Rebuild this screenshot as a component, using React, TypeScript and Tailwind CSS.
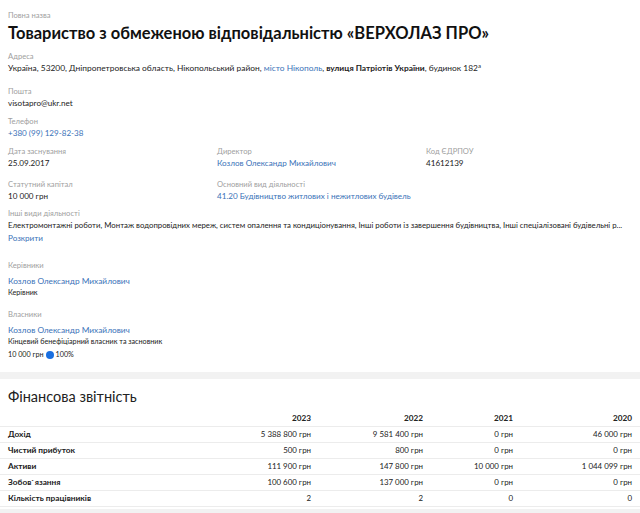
import React from 'react';

const label = 'text-[7.6px] leading-[12px] text-[#a0a0a0]';
const value = 'text-[8.1px] leading-[12px] text-[#222]';
const link = 'text-[8.1px] leading-[12px] text-[#3a72b8]';

interface FieldProps {
  title: string;
  children: React.ReactNode;
  className?: string;
}

function Field({ title, children, className }: FieldProps) {
  return (
    <div className={className}>
      <div className={label}>{title}</div>
      {children}
    </div>
  );
}

const rows = [
  { name: 'Дохід', values: ['5 388 800 грн', '9 581 400 грн', '0 грн', '46 000 грн'] },
  { name: 'Чистий прибуток', values: ['500 грн', '800 грн', '0 грн', '0 грн'] },
  { name: 'Активи', values: ['111 900 грн', '147 800 грн', '10 000 грн', '1 044 099 грн'] },
  { name: 'Зобов`язання', values: ['100 600 грн', '137 000 грн', '0 грн', '0 грн'] },
  { name: 'Кількість працівників', values: ['2', '2', '0', '0'] },
];

const years = ['2023', '2022', '2021', '2020'];

export default function App() {
  return (
    <div className="min-h-[513px] bg-[#f2f2f2] font-['Lato','Noto_Sans',sans-serif] whitespace-nowrap">
      <section className="bg-white px-2 pt-[9px] pb-[12px]">
        <Field title="Повна назва">
          <h1 className="mt-px text-[16.5px] leading-[22px] font-bold text-[#111]">
            Товариство з обмеженою відповідальністю «ВЕРХОЛАЗ ПРО»
          </h1>
        </Field>
        <Field title="Адреса" className="mt-[6px]">
          <div className={`${value} text-[8.4px]`}>
            Україна, 53200, Дніпропетровська область, Нікопольський район,{' '}
            <span className="text-[#3a72b8]">місто Нікополь</span>,{' '}
            <span className="font-bold">вулиця Патріотів України</span>, будинок 182<sup className="text-[6px]">а</sup>
          </div>
        </Field>
        <Field title="Пошта" className="mt-[11px]">
          <div className={value}>visotapro@ukr.net</div>
        </Field>
        <Field title="Телефон" className="mt-[6px]">
          <div className={link}>+380 (99) 129-82-38</div>
        </Field>
        <div className="mt-[6px] grid grid-cols-[209px_209px_1fr]">
          <Field title="Дата заснування">
            <div className={value}>25.09.2017</div>
          </Field>
          <Field title="Директор">
            <div className={link}>Козлов Олександр Михайлович</div>
          </Field>
          <Field title="Код ЄДРПОУ">
            <div className={value}>41612139</div>
          </Field>
          <Field title="Статутний капітал" className="mt-[9px]">
            <div className={value}>10 000 грн</div>
          </Field>
          <Field title="Основний вид діяльності" className="mt-[9px]">
            <div className={link}>41.20 Будівництво житлових і нежитлових будівель</div>
          </Field>
        </div>
        <Field title="Інші види діяльності" className="mt-[5px]">
          <div className="overflow-hidden text-[7.8px] leading-[13px] text-[#222]">
            Електромонтажні роботи, Монтаж водопровідних мереж, систем опалення та кондиціонування, Інші роботи із завершення будівництва, Інші спеціалізовані будівельні р...
          </div>
          <div className={link}>Розкрити</div>
        </Field>
        <Field title="Керівники" className="mt-[15px]">
          <div className="mt-[3px] text-[8.3px] leading-[14px] text-[#3a72b8]">Козлов Олександр Михайлович</div>
          <div className="text-[7.2px] leading-[10px] text-[#222]">Керівник</div>
        </Field>
        <Field title="Власники" className="mt-[10px]">
          <div className="mt-[3px] text-[8.3px] leading-[14px] text-[#3a72b8]">Козлов Олександр Михайлович</div>
          <div className="text-[7.2px] leading-[10px] text-[#222]">Кінцевий бенефіціарний власник та засновник</div>
          <div className="mt-[3px] flex items-center gap-[2px] text-[7.2px] leading-[10px] text-[#222]">
            <span>10 000 грн</span>
            <span className="inline-block h-[8px] w-[8px] rounded-full bg-[#1a6fe0]" />
            <span>100%</span>
          </div>
        </Field>
      </section>

      <section className="mt-[7px] bg-white pt-[7px]">
        <h2 className="px-2 text-[14.5px] leading-[22px] text-[#222]">Фінансова звітність</h2>
        <div className="mt-[3px] grid grid-cols-[200px_119px_112px_90px_119px] text-[7.9px] leading-[15px] text-[#222]">
          <div />
          {years.map((y) => (
            <div key={y} className="pr-2 text-right text-[8.2px] font-bold">
              {y}
            </div>
          ))}
          {rows.map((r) => (
            <React.Fragment key={r.name}>
              <div className="border-t-[1.5px] border-[#ececec] pl-2 text-[8.3px] font-bold">{r.name}</div>
              {r.values.map((v, i) => (
                <div key={i} className="border-t-[1.5px] border-[#ececec] pr-2 text-right">
                  {v}
                </div>
              ))}
            </React.Fragment>
          ))}
        </div>
        <div className="h-[3px] border-t-[1.5px] border-[#ececec]" />
      </section>
    </div>
  );
}
